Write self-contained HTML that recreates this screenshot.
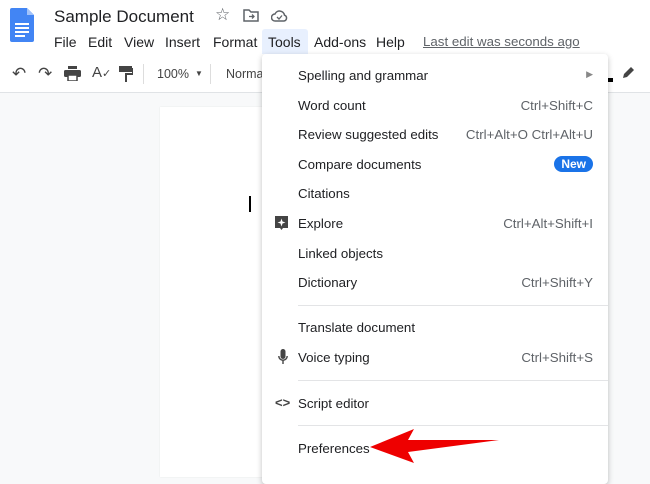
<!DOCTYPE html>
<html><head><meta charset="utf-8"><style>
*{margin:0;padding:0;box-sizing:border-box}
body{width:650px;height:466px;overflow:hidden;background:#f8f9fa;font-family:"Liberation Sans",Arial,sans-serif;position:relative;color:#202124}
.hdr{position:absolute;left:0;top:0;width:650px;height:56px;background:#fff}
.tb{position:absolute;left:0;top:56px;width:650px;height:37px;background:#fff;border-bottom:1px solid #e0e3e6}
.a{position:absolute;white-space:nowrap}
.page{position:absolute;left:160px;top:107px;width:440px;height:370px;background:#fff;box-shadow:0 0 1px #ddd}
.menu{position:absolute;left:262px;top:54px;width:346px;height:430px;background:#fff;box-shadow:0 2px 6px rgba(0,0,0,.25);border-radius:4px}
.it{position:absolute;left:36px;font-size:13.3px;color:#202124}
.sc{position:absolute;right:15px;font-size:13.3px;color:#5f6368}
.sep{position:absolute;left:36px;right:0;height:1px;background:#e3e4e6}
.mn{font-size:14px;top:34px}
</style></head><body>
<div class="hdr"></div>
<svg class="a" style="left:10px;top:8px" width="24" height="34" viewBox="0 0 24 34"><path d="M2 0h15l7 7v25a2 2 0 0 1-2 2H2a2 2 0 0 1-2-2V2a2 2 0 0 1 2-2z" fill="#4285f4"/><path d="M17 0v7h7z" fill="#a1c2fa"/><rect x="5" y="15" width="14" height="2" fill="#fff"/><rect x="5" y="19" width="14" height="2" fill="#fff"/><rect x="5" y="23" width="14" height="2" fill="#fff"/><rect x="5" y="27" width="10" height="2" fill="#fff"/></svg>
<div class="a" style="left:54px;top:7px;font-size:17px">Sample Document</div>
<div class="a" style="left:215px;top:5px;font-size:17px;color:#5f6368">☆</div>
<svg class="a" style="left:243px;top:9px" width="16" height="13" viewBox="0 0 16 13"><path d="M1 1h5l2 2h7v9H1z" fill="none" stroke="#5f6368" stroke-width="1.5"/><path d="M6 7.5h5M9 5.5l2 2-2 2" fill="none" stroke="#5f6368" stroke-width="1.3"/></svg>
<svg class="a" style="left:271px;top:9px" width="17" height="13" viewBox="0 0 17 13"><path d="M4 12a3.5 3.5 0 0 1 0-7 5 5 0 0 1 9.5 1.2A3 3 0 0 1 13 12z" fill="none" stroke="#5f6368" stroke-width="1.5"/><path d="M6 8l2 2 3-3.5" fill="none" stroke="#5f6368" stroke-width="1.3"/></svg>
<div class="a mn" style="left:54px">File</div>
<div class="a mn" style="left:88px">Edit</div>
<div class="a mn" style="left:124px">View</div>
<div class="a mn" style="left:165px">Insert</div>
<div class="a mn" style="left:213px">Format</div>
<div class="a" style="left:262px;top:29px;width:46px;height:25px;background:#e8f0fe;border-radius:3px 3px 0 0"></div>
<div class="a mn" style="left:268px">Tools</div>
<div class="a mn" style="left:314px">Add-ons</div>
<div class="a mn" style="left:376px">Help</div>
<div class="a mn" style="left:423px;color:#5f6368;text-decoration:underline;font-size:13.3px">Last edit was seconds ago</div>
<div class="tb"></div>
<div class="a" style="left:12px;top:64px;font-size:17px;color:#444">↶</div>
<div class="a" style="left:38px;top:64px;font-size:17px;color:#444">↷</div>
<svg class="a" style="left:64px;top:66px" width="17" height="15" viewBox="0 0 17 15"><rect x="4" y="0" width="9" height="3" fill="#444"/><rect x="0" y="4" width="17" height="7" rx="1.5" fill="#444"/><rect x="4" y="9" width="9" height="6" fill="#fff" stroke="#444" stroke-width="1.5"/></svg>
<div class="a" style="left:92px;top:64px;font-size:15px;color:#444">A<span style="font-size:11px">✓</span></div>
<svg class="a" style="left:119px;top:66px" width="14" height="16" viewBox="0 0 14 16"><rect x="0" y="0" width="13" height="6" fill="#444"/><path d="M13 3h1v5H7v8" fill="none" stroke="#444" stroke-width="2"/></svg>
<div class="a" style="left:143px;top:64px;width:1px;height:20px;background:#ddd"></div>
<div class="a" style="left:157px;top:67px;font-size:12.5px;color:#444">100%</div>
<div class="a" style="left:195px;top:69px;font-size:8px;color:#444">▼</div>
<div class="a" style="left:210px;top:64px;width:1px;height:20px;background:#ddd"></div>
<div class="a" style="left:226px;top:67px;font-size:12.5px;color:#444">Normal</div>
<svg class="a" style="left:622px;top:65px" width="14" height="14" viewBox="0 0 14 14"><path d="M1 13l1-4 7-7 3 3-7 7z" fill="#444"/></svg>
<div class="a" style="left:608px;top:78px;width:5px;height:4px;background:#000"></div>
<div class="page"></div>
<div class="a" style="left:249px;top:196px;width:2px;height:16px;background:#000"></div>
<div class="menu">
<div class="it" style="top:14px">Spelling and grammar</div><div class="sc" style="top:15px;font-size:9px;color:#888">▶</div>
<div class="it" style="top:44px">Word count</div><div class="sc" style="top:44px">Ctrl+Shift+C</div>
<div class="it" style="top:73px">Review suggested edits</div><div class="sc" style="top:73px">Ctrl+Alt+O Ctrl+Alt+U</div>
<div class="it" style="top:103px">Compare documents</div><div class="sc" style="top:102px;background:#1a73e8;color:#fff;font-weight:bold;font-size:12px;border-radius:8px;padding:1px 7px">New</div>
<div class="it" style="top:132px">Citations</div>
<svg class="a" style="left:13px;top:162px" width="13" height="15" viewBox="0 0 13 15"><path d="M0 0h13v12H8l-1.5 2L5 12H0z" fill="#444"/><path d="M6.5 2.5l1 3 3 1-3 1-1 3-1-3-3-1 3-1z" fill="#fff"/></svg>
<div class="it" style="top:162px">Explore</div><div class="sc" style="top:162px">Ctrl+Alt+Shift+I</div>
<div class="it" style="top:192px">Linked objects</div>
<div class="it" style="top:221px">Dictionary</div><div class="sc" style="top:221px">Ctrl+Shift+Y</div>
<div class="sep" style="top:251px"></div>
<div class="it" style="top:266px">Translate document</div>
<svg class="a" style="left:16px;top:295px" width="10" height="16" viewBox="0 0 10 16"><rect x="2.5" y="0" width="5" height="10" rx="2.5" fill="#444"/><path d="M0.8 7a4.2 4.2 0 0 0 8.4 0M5 11.5V15" fill="none" stroke="#444" stroke-width="1.4"/></svg>
<div class="it" style="top:296px">Voice typing</div><div class="sc" style="top:296px">Ctrl+Shift+S</div>
<div class="sep" style="top:326px"></div>
<div class="a" style="left:13px;top:341px;font-size:13px;color:#444;font-weight:bold">&lt;&gt;</div>
<div class="it" style="top:342px">Script editor</div>
<div class="sep" style="top:371px"></div>
<div class="it" style="top:387px">Preferences</div>
</div>
<svg class="a" style="left:368px;top:428px" width="132" height="36" viewBox="0 0 132 36"><path d="M2 19L46 1 40 12 131 12 40 24 46 35z" fill="#ee0000"/></svg>
</body></html>
